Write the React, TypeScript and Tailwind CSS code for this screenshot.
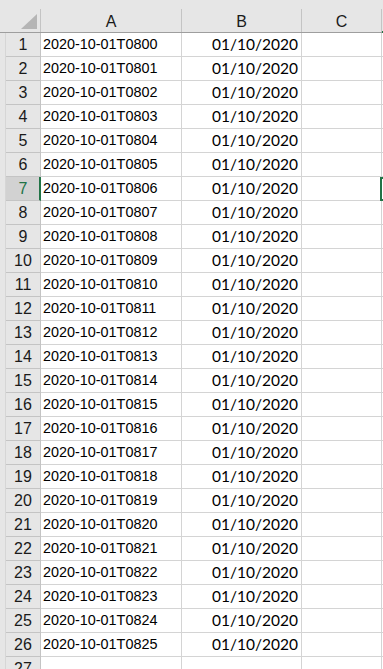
import React from 'react';

const rows = Array.from({ length: 27 }, (_, i) => i + 1);
const activeRow = 7;

export default function App() {
  return (
    <div className="w-[383px] h-[669px] overflow-hidden bg-white font-['Liberation_Sans',Arial,sans-serif] text-black">
      {/* top strip */}
      <div className="h-[9px] bg-[#e6e6e6]" />

      {/* column headers */}
      <div className="flex h-[24px] bg-[#e6e6e6] border-b border-[#9e9e9e]">
        <div className="w-[6px] shrink-0" />
        <div className="w-[35px] shrink-0 border-r border-[#c4c4c4] flex items-end justify-end pr-[3px] pb-[3px]">
          <svg width="16" height="15" viewBox="0 0 16 15">
            <polygon points="16,0 16,15 0,15" fill="#b5b5b5" />
          </svg>
        </div>
        <div className="w-[141px] shrink-0 border-r border-[#c4c4c4] flex items-center justify-center pt-[2px] text-[16px] text-[#1a1a1a]">
          A
        </div>
        <div className="w-[120px] shrink-0 border-r border-[#c4c4c4] flex items-center justify-center pt-[2px] text-[16px] text-[#1a1a1a]">
          B
        </div>
        <div className="w-[80px] shrink-0 border-r border-[#c4c4c4] flex items-center justify-center pt-[2px] text-[16px] text-[#1a1a1a]">
          C
        </div>
        <div className="flex-1 relative">
          <div className="absolute left-0 right-0 bottom-[-1px] h-[2px] bg-[#217346]" />
        </div>
      </div>

      {/* data rows */}
      {rows.map((r) => {
        const active = r === activeRow;
        const hasData = r <= 26;
        const stamp = `2020-10-01T08${String(r - 1).padStart(2, '0')}`;
        return (
          <div key={r} className="flex h-[24px]">
            <div className="w-[6px] shrink-0 bg-[#e6e6e6] border-r border-[#d6d6d6]" />
            <div
              className={
                active
                  ? 'w-[35px] shrink-0 bg-[#d2d2d2] border-b border-[#c4c4c4] border-r-2 border-r-[#217346] flex items-center justify-center pt-[1px] text-[16px] text-[#217346]'
                  : 'w-[35px] shrink-0 bg-[#e6e6e6] border-b border-r border-[#c4c4c4] flex items-center justify-center pt-[1px] text-[16px] text-[#1a1a1a]'
              }
            >
              <span className={active ? 'ml-[1px]' : ''}>{r}</span>
            </div>
            <div className="w-[141px] shrink-0 border-b border-r border-[#d4d4d4] flex items-center pl-[2px] pt-[1px] text-[14.4px]">
              {hasData ? stamp : ''}
            </div>
            <div className="w-[120px] shrink-0 border-b border-r border-[#d4d4d4] flex items-center justify-end pr-[3px] pt-[1px] text-[15.5px] font-['Lato',sans-serif]">
              {hasData ? '01/10/2020' : ''}
            </div>
            <div
              className={
                active
                  ? 'w-[78px] shrink-0 border-b border-[#d4d4d4]'
                  : 'w-[80px] shrink-0 border-b border-r border-[#d4d4d4]'
              }
            />
            <div
              className={
                active
                  ? 'flex-1 border-l-2 border-y-2 border-[#217346]'
                  : 'flex-1 border-b border-[#d4d4d4]'
              }
            />
          </div>
        );
      })}
    </div>
  );
}
